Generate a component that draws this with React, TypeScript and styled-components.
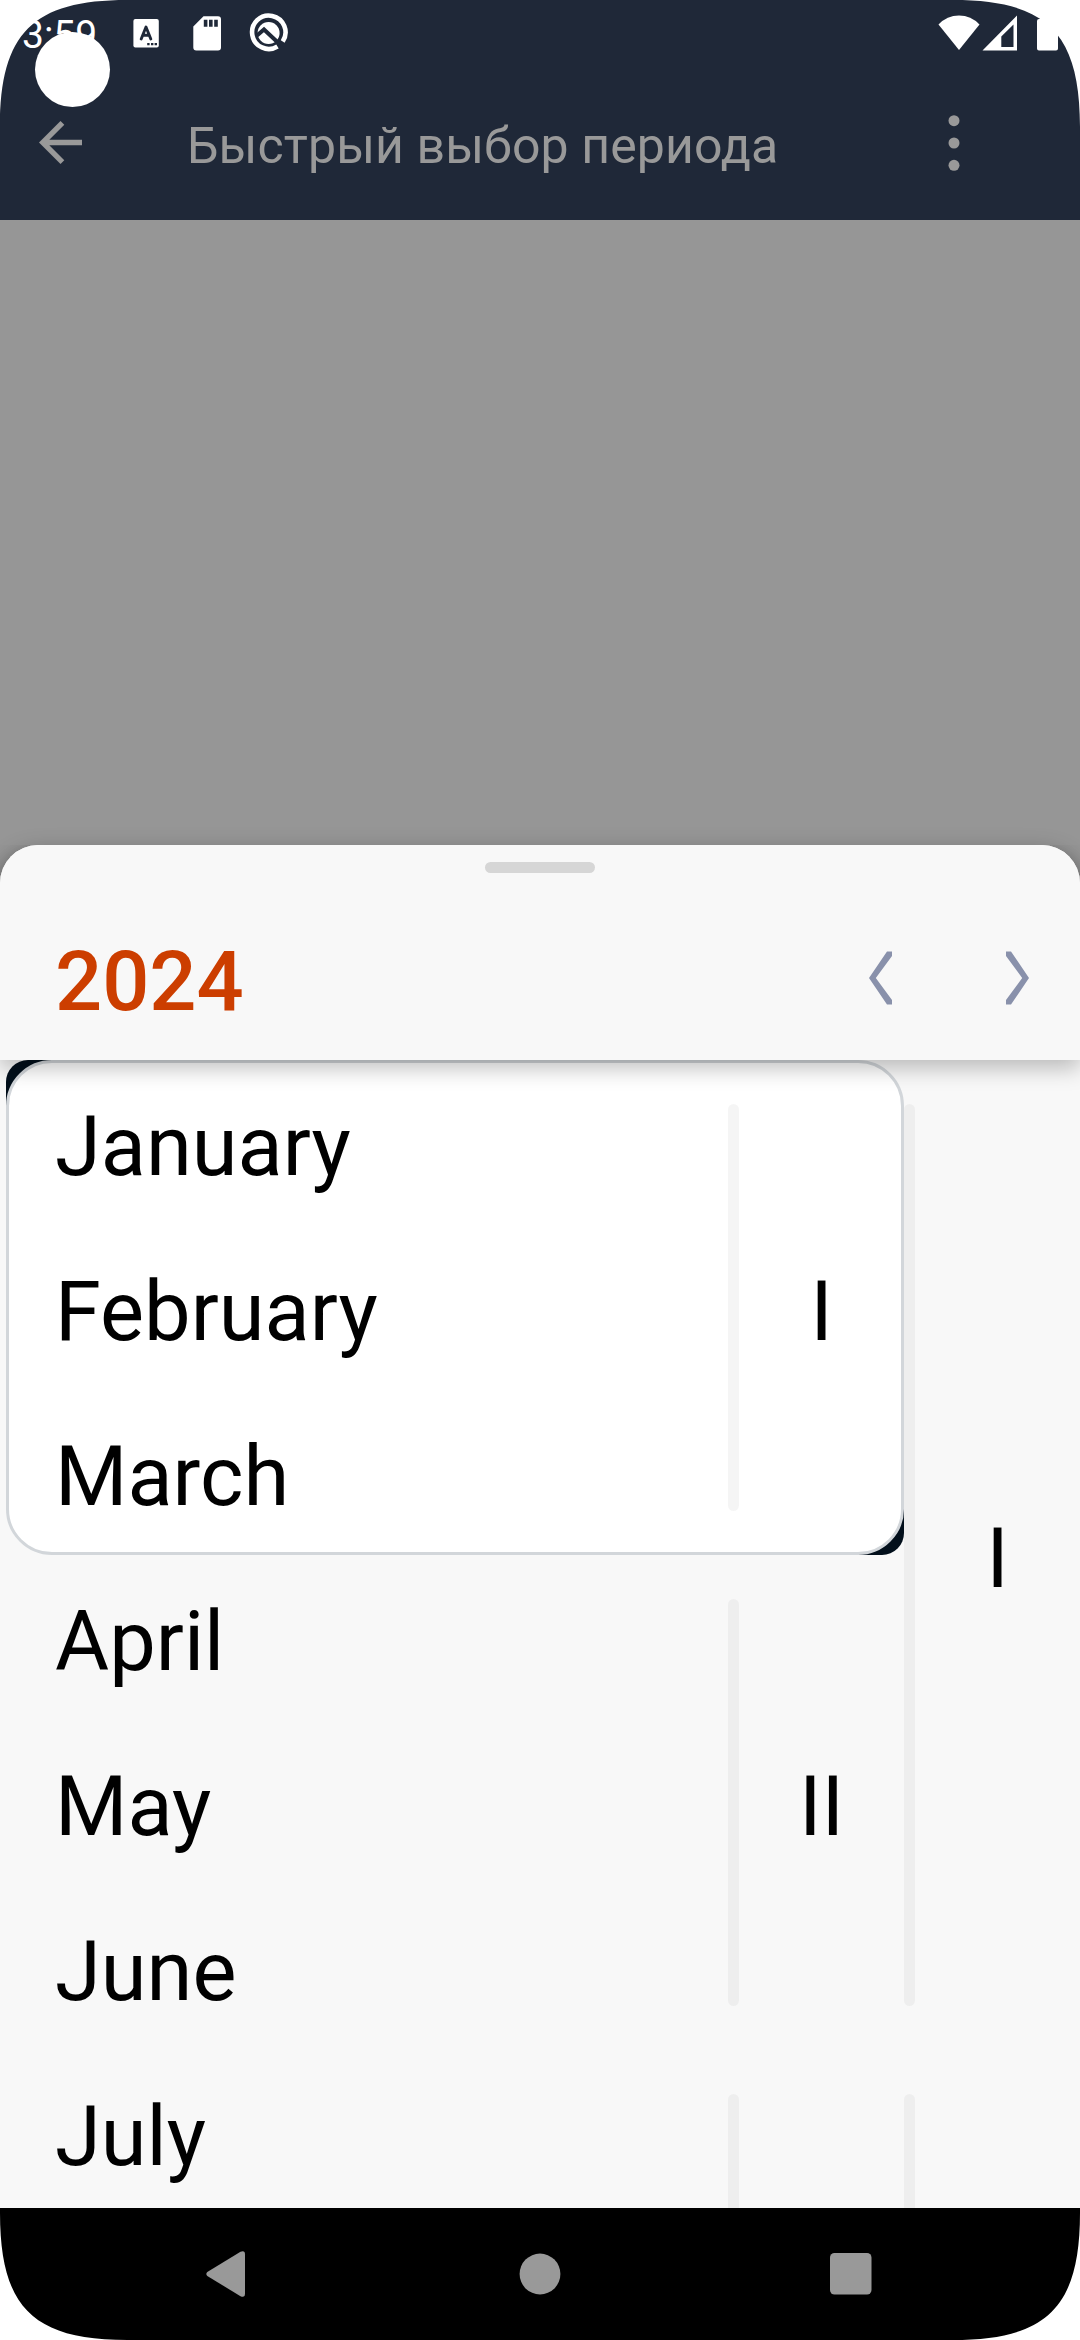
import React from "react";
import styled, { createGlobalStyle } from "styled-components";

const GlobalStyle = createGlobalStyle`
  *, *::before, *::after { box-sizing: border-box; }
  html, body { margin: 0; padding: 0; background: #fff; }
  body { font-family: Roboto, "Noto Sans", sans-serif; }
  button { border: 0; padding: 0; background: none; font: inherit; }
  svg { display: block; }
`;

const Screen = styled.div`
  position: relative;
  display: flex;
  flex-direction: column;
  width: 1080px;
  height: 2340px;
  overflow: hidden;
  background: #969696;
`;

const TopArea = styled.header`
  flex: none;
  height: 220px;
  background: #1f2838;
`;

const StatusBar = styled.div`
  display: flex;
  align-items: center;
  justify-content: space-between;
  height: 66px;
  padding: 0 22px;
`;

const StatusGroup = styled.div`
  display: flex;
  align-items: center;
  height: 66px;
`;

const Clock = styled.span`
  width: 111px;
  font-size: 39px;
  line-height: 66px;
  padding-top: 3px;
  color: #fff;
`;

const StatusIcon = styled.svg<{ $gap?: number }>`
  flex: none;
  margin-left: ${(p) => p.$gap ?? 0}px;
`;

const Toolbar = styled.div`
  display: flex;
  align-items: center;
  height: 154px;
  padding: 0 99px 0 33px;
`;

const ToolbarButton = styled.button`
  flex: none;
  width: 55px;
  height: 110px;
  padding-bottom: 1px;
  display: flex;
  align-items: center;
  justify-content: center;
`;

const Title = styled.h1`
  flex: 1;
  margin: 0 0 0 99px;
  padding-top: 5px;
  font-size: 50px;
  font-weight: 400;
  line-height: 58px;
  letter-spacing: 0.1px;
  white-space: nowrap;
  color: #999;
`;

const Sheet = styled.section`
  display: flex;
  flex-direction: column;
  flex: none;
  height: 1363px;
  margin-top: auto;
  border-radius: 38px 38px 0 0;
  background: #f8f8f8;
  box-shadow: 0 8px 24px rgba(0, 0, 0, 0.3);
`;

const SheetHeader = styled.div`
  position: relative;
  z-index: 1;
  flex: none;
  height: 215px;
  border-radius: 38px 38px 0 0;
  background: #f8f8f8;
  box-shadow: 0 8px 22px rgba(0, 0, 0, 0.26);
  clip-path: inset(0 0 -50px 0);
`;

const HandleArea = styled.div`
  display: flex;
  justify-content: center;
  height: 50px;
  padding-top: 17px;
`;

const Handle = styled.div`
  width: 110px;
  height: 11px;
  border-radius: 6px;
  background: #d6d6d6;
`;

const YearRow = styled.div`
  display: flex;
  align-items: center;
  gap: 9px;
  height: 165px;
  padding-left: 55px;
`;

const Year = styled.h2`
  flex: 1;
  margin: 0;
  padding-top: 8px;
  font-size: 83px;
  font-weight: 500;
  line-height: 96px;
  color: #cc3e00;
`;

const YearButton = styled.button`
  width: 127px;
  height: 165px;
  display: flex;
  align-items: center;
  justify-content: center;
`;

const Calendar = styled.div`
  flex: 1;
  min-height: 0;
  overflow: hidden;
`;

const HalfRow = styled.div`
  display: flex;
  height: 990px;
`;

const Quarters = styled.div`
  display: flex;
  flex-direction: column;
  flex: none;
  width: 904px;
  padding-left: 6px;
`;

const QuarterFrame = styled.div<{ $selected: boolean }>`
  flex: none;
  height: 495px;
  border-radius: 22px 44px 22px 44px;
  background: ${(p) =>
    p.$selected
      ? "linear-gradient(135deg, #020f1b 20%, transparent 20%, transparent 80%, #020f1b 80%)"
      : "none"};
`;

const QuarterCard = styled.div<{ $selected: boolean }>`
  display: flex;
  height: 495px;
  border: 3px solid ${(p) => (p.$selected ? "#d2d6da" : "transparent")};
  border-radius: 46px;
  background: ${(p) => (p.$selected ? "#fff" : "none")};
`;

const Months = styled.div`
  display: flex;
  flex-direction: column;
  flex: none;
  width: 719px;
  margin: -3px 0;
`;

const Month = styled.div`
  height: 165px;
  padding: 8px 0 0 46px;
  font-size: 83px;
  line-height: 157px;
  color: #000;
`;

const Divider = styled.div<{ $inset: number }>`
  flex: none;
  width: 11px;
  margin: ${(p) => p.$inset}px 0;
  border-radius: 6px;
  background: rgba(0, 0, 0, 0.04);
`;

const PeriodLabel = styled.div<{ $bleed?: number }>`
  flex: 1;
  display: flex;
  align-items: center;
  justify-content: center;
  margin-right: ${(p) => -(p.$bleed ?? 0)}px;
  padding-top: 8px;
  font-size: 83px;
  line-height: 96px;
  color: #000;
`;

const NavBar = styled.nav`
  display: grid;
  grid-template-columns: 436px 208px 436px;
  align-items: center;
  flex: none;
  height: 132px;
  background: #000;
  position: relative;
`;

const NavItem = styled.button<{ $side?: "left" | "right" }>`
  display: flex;
  justify-content: ${(p) =>
    p.$side === "left" ? "flex-start" : p.$side === "right" ? "flex-end" : "center"};
  padding: ${(p) =>
    p.$side === "left" ? "0 0 0 206px" : p.$side === "right" ? "0 208px 0 0" : "0"};
`;

const CameraHole = styled.div`
  position: absolute;
  top: 32px;
  left: 35px;
  width: 75px;
  height: 75px;
  border-radius: 50%;
  background: #fff;
`;

const Corner = styled.svg<{ $right?: boolean; $bottom?: boolean }>`
  position: absolute;
  ${(p) => (p.$right ? "right: 0;" : "left: 0;")}
  ${(p) => (p.$bottom ? "bottom: 0;" : "top: 0;")}
  transform: scale(${(p) => (p.$right ? -1 : 1)}, ${(p) => (p.$bottom ? -1 : 1)});
`;

const corners = [
  { right: false, bottom: false },
  { right: true, bottom: false },
  { right: false, bottom: true },
  { right: true, bottom: true },
];

const halves = [
  {
    label: "I",
    quarters: [
      { label: "I", months: ["January", "February", "March"], selected: true },
      { label: "II", months: ["April", "May", "June"], selected: false },
    ],
  },
  {
    label: "",
    quarters: [{ label: "", months: ["July"], selected: false }],
  },
];

function StatusIcons() {
  return (
    <StatusBar>
      <StatusGroup>
        <Clock>3:59</Clock>
        <StatusIcon width="26" height="29" viewBox="0 0 26 29">
          <rect x="0.4" y="0" width="25.4" height="28.6" rx="2" fill="#fff" />
          <path
            d="M8.2 20 L13 8 L17.8 20 M9.8 16.3 H16.2"
            fill="none"
            stroke="#1f2838"
            strokeWidth="2.9"
            strokeLinejoin="round"
            strokeLinecap="round"
          />
          <path d="M14.2 24h2.4v2.2h-2.4zM18 24h2.4v2.2H18zM21.6 24H24v2.2h-2.4z" fill="#1f2838" />
        </StatusIcon>
        <StatusIcon $gap={34} width="28" height="35" viewBox="0 0 28 35">
          <path
            d="M10.5 0.2H25a3 3 0 0 1 3 3V31.600a3 3 0 0 1-3 3H3.300a3 3 0 0 1-3-3V10.500z"
            fill="#fff"
          />
          <path d="M10.800 3.800h3.600v7h-3.600zM16 3.800h3.600v7H16zM21.200 3.800h3.600v7h-3.600z" fill="#1f2838" />
        </StatusIcon>
        <StatusIcon $gap={28} width="40" height="40" viewBox="0 0 40 40">
          <path
            d="M28.500 33.500A16.700 16.700 0 1 1 33.700 28.500"
            fill="none"
            stroke="#fff"
            strokeWidth="4.600"
          />
          <circle cx="19.600" cy="20" r="11" fill="#fff" />
          <path d="M8 22.500L15 16.500L31 31.500" fill="none" stroke="#1f2838" strokeWidth="4" />
        </StatusIcon>
      </StatusGroup>
      <StatusGroup>
        <StatusIcon width="42" height="36" viewBox="0 0 42 36">
          <path d="M0.500 9.500Q9 0.500 21 0.500T41.500 9.500L21 35z" fill="#fff" />
        </StatusIcon>
        <StatusIcon $gap={2} width="36" height="36" viewBox="0 0 36 36">
          <path d="M0.500 35.500L35 0.500V35.500zM19.300 32H31.500V9.500L19.300 21.500z" fill="#fff" fillRule="evenodd" />
        </StatusIcon>
        <StatusIcon $gap={19} width="21" height="36" viewBox="0 0 21 36">
          <path d="M2 4H6V0H15V4H19a2 2 0 0 1 2 2V33.500a2 2 0 0 1-2 2H2a2 2 0 0 1-2-2V6a2 2 0 0 1 2-2z" fill="#fff" />
        </StatusIcon>
      </StatusGroup>
    </StatusBar>
  );
}

export default function App() {
  return (
    <>
      <GlobalStyle />
      <Screen>
        <TopArea>
          <StatusIcons />
          <Toolbar>
            <ToolbarButton aria-label="Back">
              <svg width="43" height="43" viewBox="0 0 16 16" fill="#999">
                <path d="M16 7H3.830l5.590-5.590L8 0 0 8l8 8 1.410-1.410L3.830 9H16V7z" />
              </svg>
            </ToolbarButton>
            <Title>Быстрый выбор периода</Title>
            <ToolbarButton aria-label="More">
              <svg width="12" height="56" viewBox="0 0 12 56" fill="#999">
                <circle cx="6" cy="5.700" r="5.500" />
                <circle cx="6" cy="28" r="5.500" />
                <circle cx="6" cy="50.300" r="5.500" />
              </svg>
            </ToolbarButton>
          </Toolbar>
        </TopArea>
        <Sheet>
          <SheetHeader>
            <HandleArea>
              <Handle />
            </HandleArea>
            <YearRow>
              <Year>2024</Year>
              <YearButton aria-label="Previous year">
                <svg width="24" height="54" viewBox="0 0 24 54">
                  <path d="M18 0.500H23V5L6.800 27L23 49V53.500H18L0 27z" fill="#8991ab" />
                </svg>
              </YearButton>
              <YearButton aria-label="Next year">
                <svg width="24" height="54" viewBox="0 0 24 54">
                  <path d="M6 0.500H1V5L17.200 27L1 49V53.500H6L24 27z" fill="#8991ab" />
                </svg>
              </YearButton>
            </YearRow>
          </SheetHeader>
          <Calendar>
            {halves.map((half, i) => (
              <HalfRow key={i}>
                <Quarters>
                  {half.quarters.map((q, j) => (
                    <QuarterFrame key={j} $selected={q.selected}>
                      <QuarterCard $selected={q.selected}>
                        <Months>
                          {q.months.map((m) => (
                            <Month key={m}>{m}</Month>
                          ))}
                        </Months>
                        <Divider $inset={41} />
                        <PeriodLabel $bleed={3}>{q.label}</PeriodLabel>
                      </QuarterCard>
                    </QuarterFrame>
                  ))}
                </Quarters>
                <Divider $inset={44} />
                <PeriodLabel>{half.label}</PeriodLabel>
              </HalfRow>
            ))}
          </Calendar>
        </Sheet>
        <NavBar>
          <NavItem $side="left" aria-label="Back">
            <svg width="40" height="46" viewBox="0 0 40 46">
              <path
                d="M1.300 21L34.500 0.800Q39 -1 39 3.500V42.500Q39 47 34.500 45.200L1.300 25Q-0.700 23 1.300 21z"
                fill="#999"
              />
            </svg>
          </NavItem>
          <NavItem aria-label="Home">
            <svg width="42" height="42" viewBox="0 0 42 42">
              <circle cx="21" cy="21" r="20.400" fill="#999" />
            </svg>
          </NavItem>
          <NavItem $side="right" aria-label="Recent apps">
            <svg width="42" height="42" viewBox="0 0 42 42">
              <rect width="41.500" height="41.500" rx="4.500" fill="#999" />
            </svg>
          </NavItem>
        </NavBar>
        <CameraHole />
        {corners.map((c, i) => (
          <Corner key={i} $right={c.right} $bottom={c.bottom} width="128" height="128">
            <path d="M0 0V127C0 33 33 0 127 0z" fill="#fff" />
          </Corner>
        ))}
      </Screen>
    </>
  );
}
